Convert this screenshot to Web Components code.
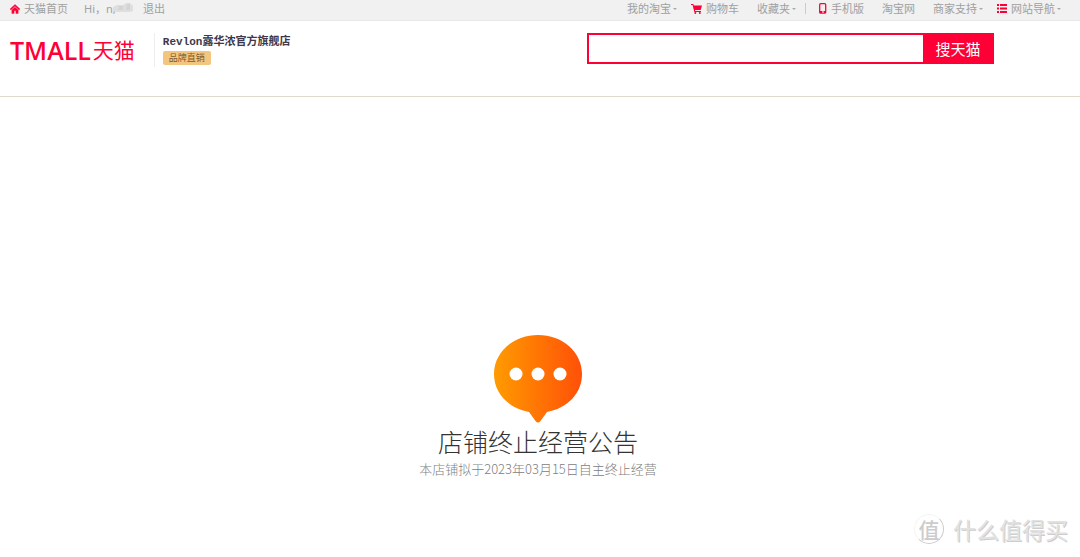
<!DOCTYPE html>
<html lang="zh-CN">
<head>
<meta charset="utf-8">
<meta name="viewport" content="width=device-width, initial-scale=1">
<title>店铺终止经营公告</title>
<style>
  body { margin: 0; background: #fff; font-family: "Noto Sans", "Noto Sans CJK SC", sans-serif; }
</style>
</head>
<body>
<shop-page></shop-page>
<script>
const define = (name, html) => {
  const template = document.createElement('template');
  template.innerHTML = html;
  customElements.define(name, class extends HTMLElement {
    constructor() {
      super();
      this.attachShadow({ mode: 'open' }).append(template.content.cloneNode(true));
    }
  });
};

define('nav-item', `
<style>
  :host { display: flex; flex: none; padding: 0 9px; }
  :host([menu]) { padding-right: 5px; }
  a { display: flex; align-items: center; color: #a0a0a0; text-decoration: none; white-space: nowrap; }
  ::slotted(svg) { display: block; margin-right: 4px; }
  i { display: none; margin-left: 2px; border: solid transparent; border-width: 2px 2px 0; border-top-color: #aaa; height: 0; }
  :host([menu]) i { display: block; }
</style>
<a href="#"><slot name="icon"></slot><slot></slot><i></i></a>`);

define('masked-name', `
<style>
  :host { display: flex; align-items: center; position: relative; width: 59px; white-space: nowrap; }
  svg { position: absolute; left: 20px; top: 0; }
</style>
<span>Hi，n,</span>
<svg width="32" height="14" viewBox="0 0 32 14" aria-hidden="true">
  <path d="M2 1h9v3H6v2H2z" fill="#f1f1f1"/>
  <path d="M9 6l4-2h6l3-2h4l3 3v5l-3 1H13l-4-1z" fill="#dedede"/>
  <path d="M15 5h4v4h-5zM23 3h3v6h-4z" fill="#d4d4d4"/>
</svg>`);

define('top-bar', `
<style>
  :host { display: flex; justify-content: space-between; box-sizing: border-box; height: 21px; line-height: 16px;
    padding: 0 14px 3px 1px; background: #f1f1f1; border-bottom: 1px solid #e8e8e8; color: #a0a0a0; font-size: 11px; }
  nav { display: flex; align-items: center; }
  masked-name { margin-left: 7px; }
  .rule { width: 1px; height: 11px; margin: 0 4px; background: #ccc; }
</style>
<nav aria-label="账户">
  <nav-item><svg slot="icon" width="10" height="10" viewBox="0 0 11 10"><path d="M0 5L5.500 0 11 5 10 6 5.500 2 1 6zM2 6l3.500-3L9 6v4H6.500V7h-2v3H2z" fill="#ff0036" stroke="#ff0036" stroke-width=".4"/></svg>天猫首页</nav-item>
  <masked-name></masked-name>
  <nav-item style="padding-left:0">退出</nav-item>
</nav>
<nav aria-label="导航">
  <nav-item menu>我的淘宝</nav-item>
  <nav-item><svg slot="icon" width="11" height="10" viewBox="0 0 11 10"><path d="M0 0h2.300l.5 1.500H11L9.700 6H4l.2 1H10v1H3.300L1.600 1H0zM3 2h7l-1 3H4z" fill="#ff0036"/><circle cx="4.300" cy="9" r="1" fill="#ff0036"/><circle cx="8.800" cy="9" r="1" fill="#ff0036"/></svg>购物车</nav-item>
  <nav-item menu>收藏夹</nav-item>
  <span class="rule"></span>
  <nav-item><svg slot="icon" width="8" height="11" viewBox="0 0 8 11"><rect x=".7" y=".7" width="6" height="9.500" rx="1" fill="none" stroke="#ff0036" stroke-width="1.300"/><path d="M1 8h6v2H1z" fill="#ff0036"/><path d="M3 8.500h2v1H3z" fill="#fff"/></svg>手机版</nav-item>
  <nav-item>淘宝网</nav-item>
  <nav-item menu>商家支持</nav-item>
  <nav-item menu><svg slot="icon" width="10" height="9" viewBox="0 0 10 9"><path d="M0 0h2v2H0zM3 0h7v2H3zM0 3.500h2v2H0zM3 3.500h7v2H3zM0 7h2v2H0zM3 7h7v2H3z" fill="#ff0036"/></svg>网站导航</nav-item>
</nav>`);

define('tmall-logo', `
<style>
  :host { display: block; }
  a { display: flex; align-items: center; color: #ff0036; text-decoration: none; line-height: 30px; white-space: nowrap; }
  .latin { font: 600 25px/30px "Open Sans", sans-serif; }
  .han { font: 400 21px/28px "Noto Sans CJK SC", sans-serif; margin-left: 2px; padding-bottom: 2px; }
</style>
<a href="#"><span class="latin">TMALL</span><span class="han">天猫</span></a>`);

define('shop-name', `
<style>
  :host { display: flex; flex-direction: column; align-items: flex-start; padding-left: 8px; border-left: 1px solid #ededed; height: 34px; box-sizing: border-box; }
  strong { font: 700 11px/18px "Liberation Mono", "Noto Sans CJK SC", monospace; color: #40384a; white-space: nowrap; }
  span { font-size: 9px; line-height: 14px; padding: 0 6px; border-radius: 2px; background: #f3c680; color: #80592a; white-space: nowrap; }
</style>
<strong><slot></slot></strong><span><slot name="badge"></slot></span>`);

define('search-box', `
<style>
  :host { display: block; }
  form { display: flex; height: 31px; margin: 0; }
  input { flex: 1; min-width: 0; box-sizing: border-box; margin: 0; border: 2px solid #ff0036; border-right: 0; border-radius: 0; padding: 0 6px; background: #fff; font: inherit; outline: 0; }
  button { width: 71px; border: 0; padding: 0; background: #ff0036; color: #fff; font: 400 15px/31px "Noto Sans CJK SC", sans-serif; }
</style>
<form role="search"><input type="text" aria-label="搜索"><button type="button">搜天猫</button></form>`);

define('shop-header', `
<style>
  :host { display: flex; align-items: flex-start; padding: 12px 8% 29px 10px; border-bottom: 1px solid #e0dacb; }
  tmall-logo { margin: 2px 19px 0 0; }
  search-box { width: 41%; min-width: 407px; margin-left: auto; }
</style>
<tmall-logo></tmall-logo>
<shop-name>Revlon露华浓官方旗舰店<b slot="badge" style="font-weight:400">品牌直销</b></shop-name>
<search-box></search-box>`);

define('closing-notice', `
<style>
  :host { display: flex; flex-direction: column; align-items: center; padding: 238px 4px 76px 0; text-align: center; }
  svg { display: block; }
  h1 { margin: 0; font: 300 25px/36px "Noto Sans CJK SC", sans-serif; color: #333; }
  p { margin: 0; font: 300 13px/20px "Noto Sans CJK SC", sans-serif; color: #808080; }
</style>
<svg width="88" height="88" viewBox="0 0 88 88" aria-hidden="true">
  <defs><linearGradient id="g"><stop stop-color="#ff9b00"/><stop offset="1" stop-color="#ff5008"/></linearGradient></defs>
  <path d="M44 0C68.500 0 88 17 88 39c0 19-14 34-35 38l-6.500 9q-2.500 3-5 0L35 77C14 73 0 58 0 39 0 17 19.500 0 44 0z" fill="url(#g)"/>
  <g fill="#fff"><circle cx="22" cy="39" r="6.500"/><circle cx="44" cy="39" r="6.500"/><circle cx="66" cy="39" r="6.500"/></g>
</svg>
<h1>店铺终止经营公告</h1>
<p>本店铺拟于2023年03月15日自主终止经营</p>`);

define('site-mark', `
<style>
  :host { position: absolute; right: 12px; bottom: 10px; display: flex; align-items: center; gap: 9px; color: #e2e2e2; text-shadow: 1px 1px 0 #cdcdcd; font: 400 23px/36px "Noto Sans CJK SC", sans-serif; white-space: nowrap; }
  b { width: 28px; height: 28px; line-height: 28px; border-radius: 50%; text-align: center; font-size: 21px; font-weight: 500; color: #ccc; text-shadow: none; border: 1px solid #f4f4f4; border-right-color: #ccc; border-bottom-color: #ccc; }
</style>
<b>值</b><span>什么值得买</span>`);

define('shop-page', `
<style>:host { display: block; position: relative; min-height: 100vh; }</style>
<top-bar></top-bar>
<shop-header></shop-header>
<main><closing-notice></closing-notice></main>
<site-mark></site-mark>`);
</script>
</body>
</html>
